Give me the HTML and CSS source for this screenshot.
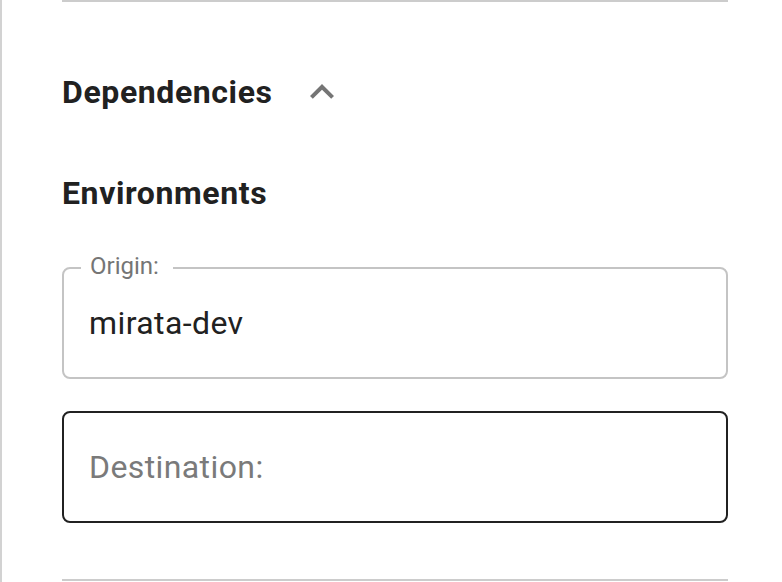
FILE: index.html
```html
<!DOCTYPE html>
<html lang="en">
<head>
<meta charset="utf-8">
<title>Dependencies</title>
<link rel="stylesheet" href="styles.css">
</head>
<body>
<div class="panel">
  <div class="divider"></div>
  <div class="section-head">
    <h2 class="section-title">Dependencies</h2>
    <span class="toggle" aria-label="Collapse">
      <svg viewBox="0 0 24 24" width="48" height="48"><path d="M12 8l-6 6 1.41 1.41L12 10.83l4.59 4.58L18 14z"/></svg>
    </span>
  </div>
  <h3 class="sub-title">Environments</h3>
  <div class="fields">
    <div class="field">
      <span class="field-label">Origin:</span>
      <span class="field-value">mirata-dev</span>
    </div>
    <div class="field field-focused">
      <span class="field-placeholder">Destination:</span>
    </div>
  </div>
  <div class="divider divider-bottom"></div>
</div>
</body>
</html>
```
FILE: styles.css
```css
* { box-sizing: border-box; }
html, body { margin: 0; padding: 0; background: #fff; }
body { font-family: Roboto, "Noto Sans", "Liberation Sans", sans-serif; color: #212121; }

.panel {
  border-left: 2px solid #d2d2d2;
  min-height: 582px;
  padding: 0 54px 0 60px;
}

.divider { height: 2px; background: #cccccc; }
.divider-bottom { margin-top: 56px; }

.section-head {
  display: flex;
  align-items: center;
  height: 48px;
  margin-top: 66px;
}
.section-title {
  margin: 0;
  font-size: 32px;
  font-weight: 700;
  line-height: 48px;
  letter-spacing: 0.6px;
}
.toggle { display: flex; margin-left: 25px; }
.toggle svg { fill: #757575; }

.sub-title {
  margin: 53px 0 0;
  font-size: 32px;
  font-weight: 700;
  line-height: 48px;
  letter-spacing: 0.6px;
}

.fields {
  display: flex;
  flex-direction: column;
  gap: 32px;
  margin-top: 50px;
}
.field {
  position: relative;
  display: flex;
  align-items: center;
  height: 112px;
  padding: 0 24px 0 25px;
  border: 2px solid #c4c4c4;
  border-radius: 8px;
}
.field-focused { border-color: #212121; }
.field-label {
  position: absolute;
  top: -15px;
  left: 17px;
  padding: 0 14px 0 9px;
  background: #fff;
  font-size: 24px;
  line-height: 24px;
  color: #757575;
}
.field-value, .field-placeholder {
  font-size: 32px;
  line-height: 32px;
  letter-spacing: 0.4px;
}
.field-placeholder { color: #7a7a7a; }
```
